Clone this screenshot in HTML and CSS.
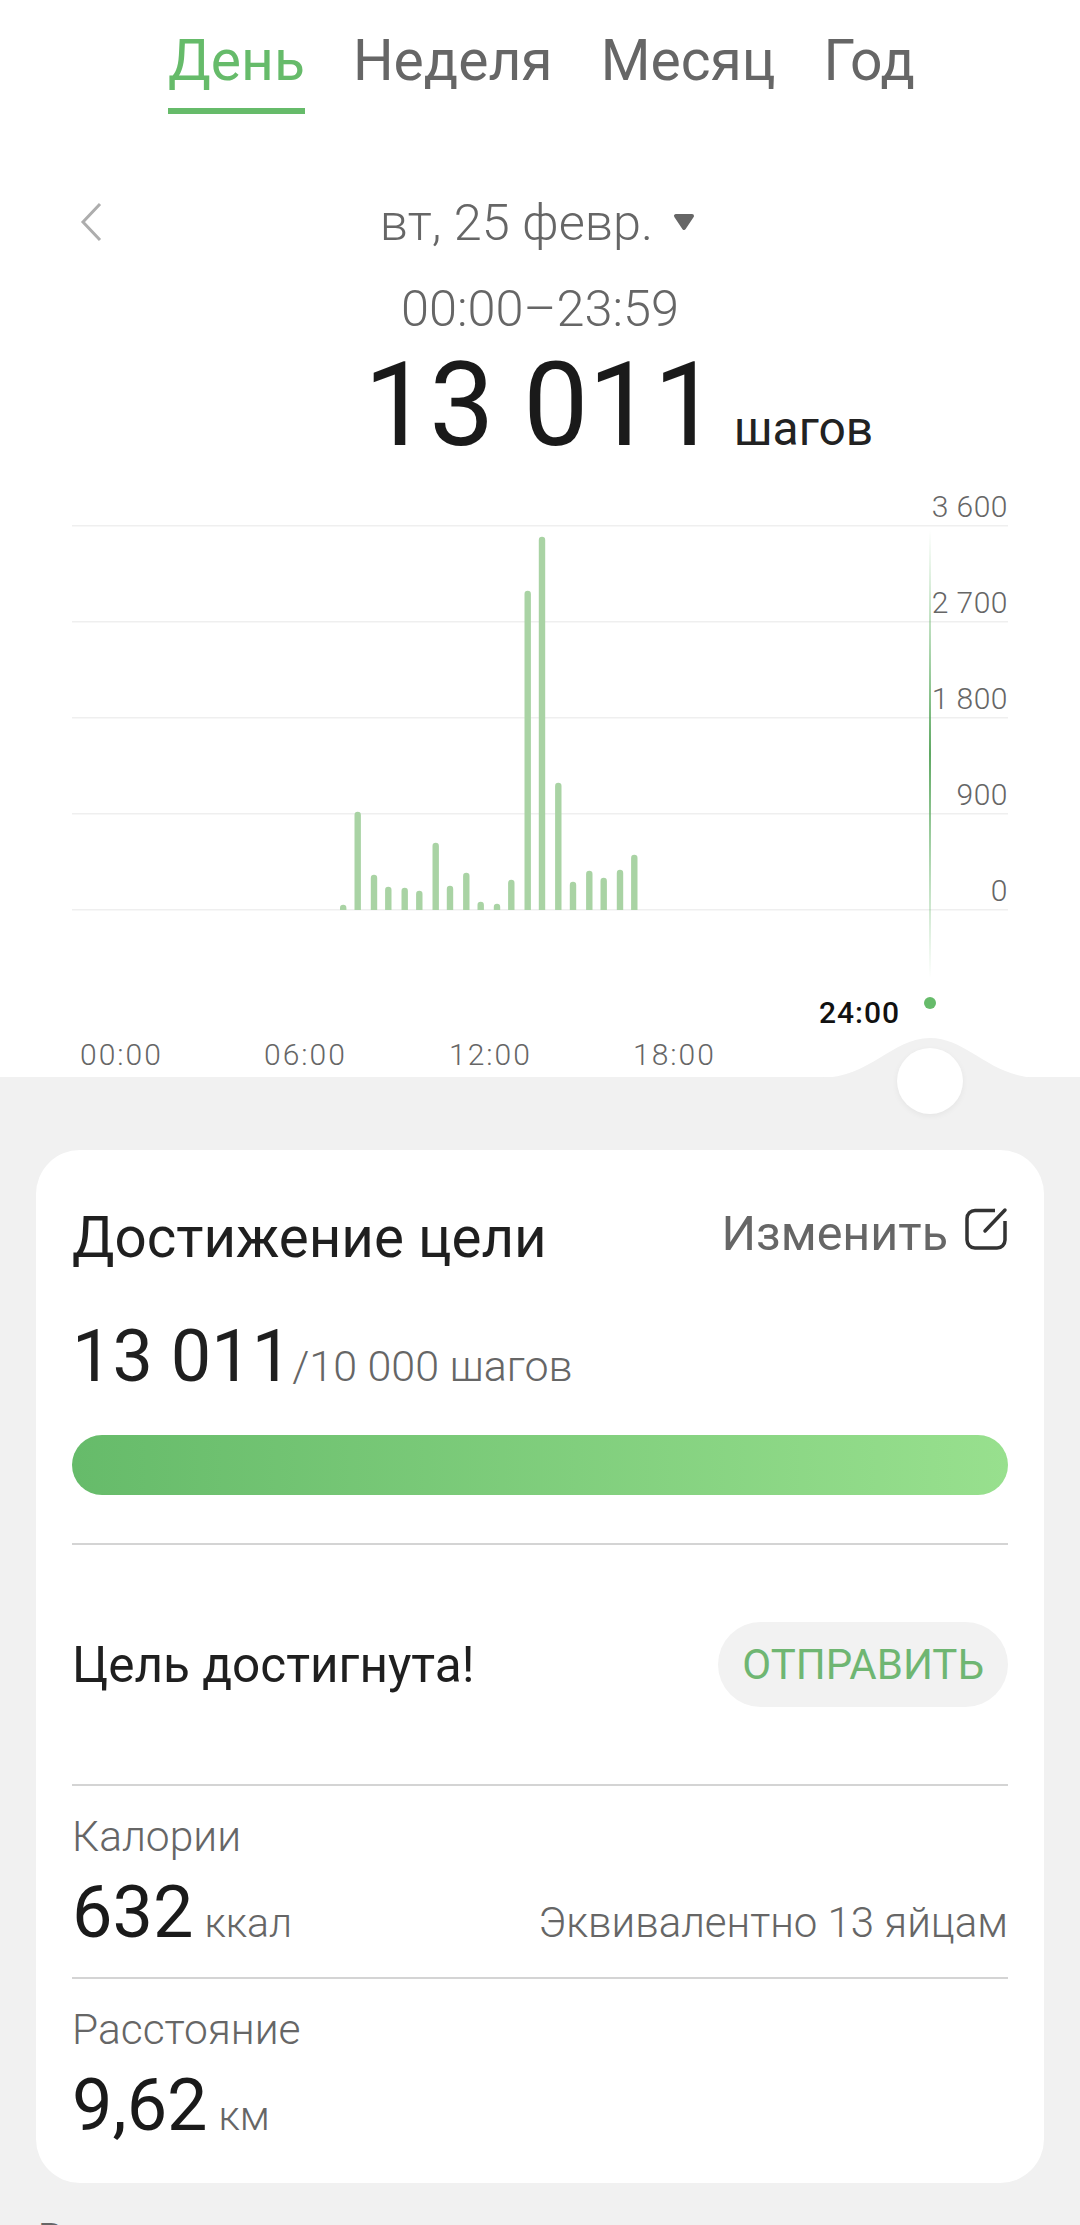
FILE: index.html
```html
<!DOCTYPE html>
<html lang="ru">
<head>
<meta charset="UTF-8" />
<meta name="viewport" content="width=device-width, initial-scale=1" />
<title>Шаги</title>
<link rel="stylesheet" href="styles.css">
</head>
<body>
  <div class="top">
    <nav class="tabs">
      <a class="tab active">День</a>
      <a class="tab">Неделя</a>
      <a class="tab">Месяц</a>
      <a class="tab">Год</a>
    </nav>

    <div class="date-row">
      <svg class="back" width="22" height="40" viewBox="0 0 22 40"><path d="M20 2 L3 20 L20 38" fill="none" stroke="#adadad" stroke-width="3"/></svg>
      <span class="date">вт, 25 февр.</span>
      <svg class="drop" width="22" height="18" viewBox="0 0 22 18"><path d="M3 3 H19 L11 15 Z" fill="#666" stroke="#666" stroke-width="4" stroke-linejoin="round"/></svg>
    </div>
    <div class="time">00:00–23:59</div>
    <div class="total"><span class="total-num">13 011</span><span class="total-unit">шагов</span></div>

    <svg class="chart" width="1080" height="607" viewBox="0 470 1080 607">
      <defs>
        <linearGradient id="cursor" x1="0" y1="0" x2="0" y2="1">
          <stop offset="0" stop-color="#66bb6a" stop-opacity="0"/>
          <stop offset="0.5" stop-color="#5fa863"/>
          <stop offset="1" stop-color="#66bb6a" stop-opacity="0"/>
        </linearGradient>
      </defs>
      <g class="grid">
        <rect x="72" y="525" width="936" height="1.5"/>
        <rect x="72" y="621" width="936" height="1.5"/>
        <rect x="72" y="717" width="936" height="1.5"/>
        <rect x="72" y="813" width="936" height="1.5"/>
        <rect x="72" y="909" width="936" height="1.5"/>
      </g>
      <g class="bars">
        <path d="M340 910V908a3.2 3.2 0 0 1 6.400 0V910Z"/>
        <path d="M354.500 910V815a3.200 3.200 0 0 1 6.400 0V910Z"/>
        <path d="M370.800 910V878a3.200 3.200 0 0 1 6.400 0V910Z"/>
        <path d="M385.100 910V890a3.200 3.200 0 0 1 6.400 0V910Z"/>
        <path d="M401.500 910V891a3.200 3.200 0 0 1 6.400 0V910Z"/>
        <path d="M416.100 910V894a3.200 3.200 0 0 1 6.400 0V910Z"/>
        <path d="M432.500 910V846a3.200 3.200 0 0 1 6.400 0V910Z"/>
        <path d="M446.800 910V889a3.200 3.200 0 0 1 6.400 0V910Z"/>
        <path d="M463.100 910V876a3.200 3.200 0 0 1 6.400 0V910Z"/>
        <path d="M477.500 910V905a3.200 3.200 0 0 1 6.400 0V910Z"/>
        <path d="M493.800 910V907a3.200 3.200 0 0 1 6.400 0V910Z"/>
        <path d="M508.100 910V883a3.200 3.200 0 0 1 6.400 0V910Z"/>
        <path d="M524.500 910V594a3.200 3.200 0 0 1 6.400 0V910Z"/>
        <path d="M538.800 910V540a3.200 3.200 0 0 1 6.400 0V910Z"/>
        <path d="M555.100 910V786a3.200 3.200 0 0 1 6.400 0V910Z"/>
        <path d="M569.800 910V885a3.200 3.200 0 0 1 6.400 0V910Z"/>
        <path d="M586.100 910V874a3.200 3.200 0 0 1 6.400 0V910Z"/>
        <path d="M600.500 910V881a3.200 3.200 0 0 1 6.400 0V910Z"/>
        <path d="M616.800 910V873a3.200 3.200 0 0 1 6.400 0V910Z"/>
        <path d="M631.100 910V858a3.200 3.200 0 0 1 6.400 0V910Z"/>
      </g>
      <rect x="929" y="530" width="2" height="448" fill="url(#cursor)"/>
      <circle cx="930" cy="1003" r="6" fill="#66bb6a"/>
      <g class="y-labels">
        <text x="1008" y="517">3 600</text>
        <text x="1008" y="613">2 700</text>
        <text x="1008" y="709">1 800</text>
        <text x="1008" y="805">900</text>
        <text x="1008" y="901">0</text>
      </g>
      <g class="x-labels">
        <text x="80" y="1065">00:00</text>
        <text x="264" y="1065">06:00</text>
        <text x="449" y="1065">12:00</text>
        <text x="633" y="1065">18:00</text>
      </g>
      <text class="now-label" x="819" y="1023">24:00</text>
    </svg>
  </div>

  <div class="bottom">
    <!-- бугорок ползунка -->
    <svg class="hump" width="220" height="40" viewBox="0 0 220 40"><path d="M0 40 C50 40 72 0 110 0 C148 0 170 40 220 40 Z" fill="#f1f1f1"/></svg>
    <div class="knob"></div>

    <section class="card">
      <div class="goal-head">
        <h2>Достижение цели</h2>
        <a class="edit">Изменить
          <svg width="44" height="44" viewBox="0 0 44 44"><path d="M31 3.500 H11 a8 8 0 0 0 -8 8 V33 a8 8 0 0 0 8 8 H33 a8 8 0 0 0 8 -8 V14" fill="none" stroke="#333" stroke-width="3.500"/><path d="M41 3 L21 24" fill="none" stroke="#333" stroke-width="3.500" stroke-linecap="round"/></svg>
        </a>
      </div>
      <div class="goal-value"><span class="goal-num">13 011</span><span class="goal-of">/10 000 шагов</span></div>
      <div class="progress"></div>

      <div class="row reached">
        <span>Цель достигнута!</span>
        <a class="send">ОТПРАВИТЬ</a>
      </div>

      <div class="row stat">
        <div class="stat-name">Калории</div>
        <div class="stat-line">
          <div><span class="stat-num">632</span><span class="stat-unit">ккал</span></div>
          <span class="stat-note">Эквивалентно 13 яйцам</span>
        </div>
      </div>

      <div class="row stat">
        <div class="stat-name">Расстояние</div>
        <div class="stat-line">
          <div><span class="stat-num">9,62</span><span class="stat-unit">км</span></div>
        </div>
      </div>
    </section>

    <h3 class="next-title">В</h3>
  </div>
</body>
</html>
```

FILE: styles.css
```css
body, html {
  margin: 0; padding: 0; height: 100%; overflow: hidden;
  background: #fff;
  font-family: Roboto, "Noto Sans", sans-serif;
  font-weight: 300;
}
.top {
  height: 1077px;
  overflow: hidden;
}
.tabs {
  display: flex;
  padding: 30px 0 0 168px;
  height: 84px;
}
.tab {
  font-size: 57px;
  line-height: 62px;
  color: #666;
  height: 84px;
  box-sizing: border-box;
  margin-right: 48px;
  font-weight: 400;
}
.tab.active {
  color: #66bb6a;
  border-bottom: 6px solid #66bb6a;
}
.date-row {
  display: flex;
  align-items: center;
  position: relative;
  justify-content: center;
  gap: 20px;
  height: 60px;
  margin-top: 78px;
  padding-right: 5px;
}
.back {
  position: absolute;
  left: 80px;
  top: 10px;
}
.date {
  font-size: 50.500px;
  color: #666;
}
.time {
  text-align: center;
  font-size: 50.500px;
  line-height: 56px;
  color: #666;
  margin-top: 29px;
}
.total {
  display: flex;
  align-items: baseline;
  padding: 13px 0 0 364px;
  height: 110px;
}
.total-num {
  font-size: 116px;
  line-height: 110px;
  color: #1a1a1a;
  font-weight: 400;
}
.total-unit {
  font-size: 48px;
  color: #222;
  margin-left: 15px;
  font-weight: 400;
}
.chart {
  display: block;
  margin-top: 10px;
  font-family: Roboto, sans-serif;
}
.grid rect { fill: #efefef; }
.bars path { fill: #a9d3a4; }
.y-labels text {
  font-size: 30px;
  fill: #666;
  text-anchor: end;
  letter-spacing: 0.500px;
}
.x-labels text {
  font-size: 30px;
  fill: #666;
  letter-spacing: 2px;
}
.now-label {
  font-size: 30px;
  font-weight: 500;
  fill: #111;
  letter-spacing: 1px;
}
.bottom {
  position: relative;
  background: #f1f1f1;
  height: 1148px;
  padding: 73px 36px 0;
}
.hump {
  position: absolute;
  left: 820px;
  top: -39px;
}
.knob {
  position: absolute;
  left: 897px;
  top: -29px;
  width: 66px;
  height: 66px;
  border-radius: 50%;
  background: #fff;
  box-shadow: 0 2px 6px rgba(0,0,0,0.05);
}
.card {
  background: #fff;
  border-radius: 44px;
  height: 1033px;
  padding: 0 36px;
}
.goal-head {
  display: flex;
  justify-content: space-between;
  padding-top: 56px;
  height: 76px;
}
.goal-head h2 {
  margin: 0;
  font-size: 56.500px;
  font-weight: 400;
  line-height: 64px;
  color: #1f1f1f;
}
.edit {
  display: flex;
  align-items: flex-start;
  font-size: 48.500px;
  line-height: 56px;
  color: #666;
  gap: 16px;
  font-weight: 400;
}
.edit svg {
  margin-top: 1px;
}
.goal-value {
  margin-top: 32px;
  display: flex;
  align-items: baseline;
}
.goal-num {
  font-size: 72px;
  color: #1f1f1f;
  font-weight: 400;
}
.goal-of {
  font-size: 43px;
  color: #666;
}
.progress {
  height: 60px;
  margin-top: 36px;
  border-radius: 30px;
  background: linear-gradient(90deg, #66bb6a, #98e08e);
  margin-bottom: 48px;
}
.row {
  border-top: 2px solid #d4d4d4;
}
.reached {
  display: flex;
  justify-content: space-between;
  align-items: center;
  height: 239px;
  font-size: 49.500px;
  color: #1f1f1f;
  font-weight: 400;
}
.send {
  background: #f2f2f2;
  color: #6fb672;
  border-radius: 43px;
  padding: 0 24px;
  line-height: 85px;
  font-size: 42px;
  font-weight: 400;
}
.stat {
  height: 191px;
}
.stat-name {
  font-size: 42.500px;
  color: #666;
  margin-top: 24px;
  line-height: 54px;
}
.stat-line {
  display: flex;
  justify-content: space-between;
  align-items: baseline;
  margin-top: 9px;
}
.stat-num {
  font-size: 72px;
  color: #1a1a1a;
  font-weight: 400;
  line-height: 80px;
}
.stat-unit {
  font-size: 41px;
  color: #666;
  margin-left: 11px;
}
.stat-note {
  font-size: 42px;
  color: #666;
}
.next-title {
  margin: 36px 0 0 2px;
  font-size: 40px;
  line-height: 40px;
  font-weight: 400;
  color: #666;
}
```
